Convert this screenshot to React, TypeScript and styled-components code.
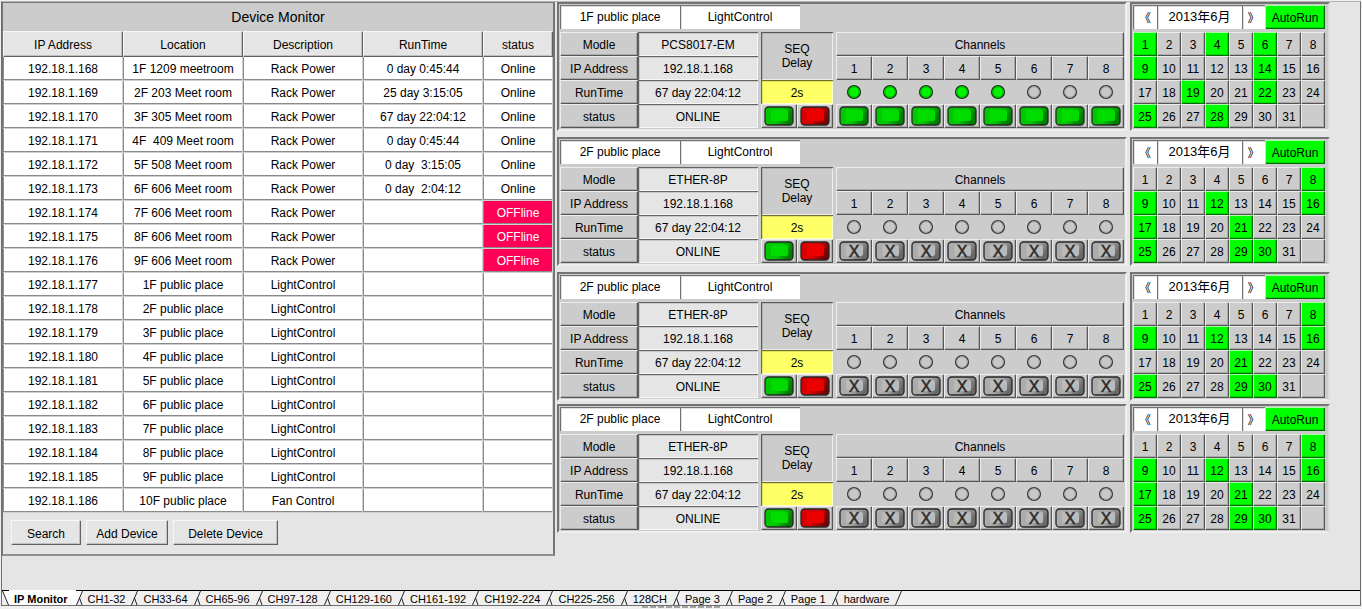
import React, { useState } from "react";
import styled, { createGlobalStyle, css } from "styled-components";

const GlobalStyle = createGlobalStyle`
  * { box-sizing: border-box; }
  body {
    margin: 0;
    background: #f0f0f0;
    color: #000;
    font-family: "Liberation Sans", Arial, "Noto Sans CJK SC", sans-serif;
    font-size: 12px;
    line-height: 14px;
  }
  button, input { font: inherit; color: inherit; margin: 0; border: 0; border-radius: 0; }
`;

const raised = css`
  box-shadow: inset 1px 1px 0 rgba(255, 255, 255, 0.65), inset -1px -1px 0 rgba(0, 0, 0, 0.5),
    inset -2px -2px 0 rgba(0, 0, 0, 0.16);
`;

const sunken = css`
  box-shadow: inset 1px 1px 0 rgba(0, 0, 0, 0.5), inset 2px 2px 0 rgba(0, 0, 0, 0.12),
    inset -1px -1px 0 rgba(255, 255, 255, 0.65);
`;

const Page = styled.div`
  min-height: 100vh;
  padding: 1px 1px 0;
  display: flex;
  flex-direction: column;
`;

const Frame = styled.div`
  flex: 1;
  display: flex;
  flex-direction: column;
  border: 1px solid #6e6e6e;
  border-top-color: #b4b8b4;
  background: #e5e5e5;
`;

const Main = styled.main`
  flex: 1;
  display: flex;
  align-items: flex-start;
  gap: 2px;
  padding-right: 30px;
`;

const DevicePanel = styled.section`
  flex: 553 553 553px;
  min-width: 0;
  border: solid #767676;
  border-width: 1px 2px 2px 1px;
  border-bottom-color: #8e8e8e;
`;

const PanelTitle = styled.h1`
  margin: 0;
  height: 28px;
  line-height: 28px;
  background: #ccc;
  font-size: 14px;
  font-weight: 400;
  text-align: center;
`;

const DeviceTable = styled.table`
  width: 100%;
  table-layout: fixed;
  border-collapse: separate;
  border-spacing: 0;
  text-align: center;
`;

const Col = styled.col<{ $w: number }>`
  width: ${(p) => p.$w}px;
`;

const DeviceHead = styled.th`
  height: 26px;
  padding: 2px 0 0;
  background: #e5e5e5;
  font-weight: 400;
  ${raised}
`;

const DeviceCell = styled.td<{ $alert?: boolean }>`
  height: 24px;
  padding: 0;
  white-space: pre;
  background: ${(p) => (p.$alert ? "#ff0055" : "#fff")};
  color: ${(p) => (p.$alert ? "#fff" : "#000")};
  box-shadow: inset -1px -1px 0 #d0d0d0, inset 1px 0 0 #8a8a8a, inset 0 -2px 0 #8a8a8a;
`;

const Toolbar = styled.div`
  display: flex;
  gap: 5px;
  padding: 7px 8px 9px;
`;

const ToolButton = styled.button<{ $w: number }>`
  width: ${(p) => p.$w}px;
  height: 25px;
  padding: 2px 0 0;
  background: #e5e5e5;
  ${raised}
`;

const Stations = styled.div`
  flex: 773 773 773px;
  min-width: 0;
`;

const StationRow = styled.div`
  display: flex;
  gap: 3px;
  margin-bottom: 6px;
  &:nth-last-child(2) { margin-bottom: 3px; }
`;

const Group = styled.section`
  min-width: 0;
  padding: 1px;
  background: #ccc;
  border: 2px solid #747474;
  border-right-color: #f0f0f0;
  border-bottom-color: #eee;
`;

const ControlGroup = styled(Group)`
  flex: 570 570 570px;
`;

const CalendarGroup = styled(Group)`
  flex: 200 200 200px;
  padding-right: 3px;
  border-right-color: #dcdcdc;
`;

const TitleRow = styled.div`
  display: flex;
  margin-bottom: 3px;
`;

const TitleInput = styled.input`
  width: 120px;
  height: 24px;
  padding: 0;
  background: #fff;
  text-align: center;
  ${sunken}
`;

const ControlBody = styled.div`
  display: grid;
  grid-template-columns: minmax(0, 198fr) minmax(0, 72fr) minmax(0, 288fr);
  column-gap: 3px;
`;

const GridTable = styled.table`
  width: 100%;
  table-layout: fixed;
  border-collapse: separate;
  border-spacing: 0;
  text-align: center;
`;

const LabelCell = styled.th`
  height: 24px;
  padding: 2px 0 0;
  font-weight: 400;
  background: #ccc;
  ${raised}
`;

const ValueCell = styled.td`
  height: 24px;
  padding: 2px 0 0;
  background: #e5e5e5;
  ${sunken}
`;

const Plain = styled.td`
  height: 24px;
  padding: 0;
`;

const Sequence = styled.div`
  display: grid;
  grid-template-columns: 1fr 1fr;
  grid-template-rows: 48px 24px 24px;
`;

const SequenceLabel = styled.label`
  grid-column: 1 / -1;
  display: flex;
  align-items: center;
  justify-content: center;
  text-align: center;
  ${sunken}
`;

const DelayInput = styled.input`
  grid-column: 1 / -1;
  width: 100%;
  height: 24px;
  padding: 2px 0 0;
  background: #ffff66;
  text-align: center;
  ${sunken}
`;

const KeyButton = styled.button`
  display: flex;
  align-items: center;
  justify-content: center;
  width: 100%;
  height: 24px;
  padding: 0;
  background: #ccc;
  ${raised}
`;

const Art = styled.svg`
  display: block;
  flex: none;
  margin: 0 auto;
`;

const CalendarHead = styled.div`
  display: grid;
  grid-template-columns: 24fr 85fr 23fr 60fr;
  margin-bottom: 3px;
`;

const StepButton = styled.button`
  height: 24px;
  padding: 3px 0 0;
  background: #fff;
  ${sunken}
`;

const MonthInput = styled.input`
  width: 100%;
  min-width: 0;
  height: 24px;
  padding: 0 0 3px;
  background: #fff;
  font-size: 13px;
  text-align: center;
  ${sunken}
`;

const AutoButton = styled.button`
  height: 24px;
  padding: 2px 0 0;
  background: #00ff00;
  ${raised}
`;

const Days = styled.div`
  display: grid;
  grid-template-columns: repeat(8, 1fr);
`;

const Day = styled.button<{ $on?: boolean }>`
  height: 24px;
  padding: 2px 0 0;
  background: ${(p) => (p.$on ? "#00ff00" : "#ccc")};
  ${raised}
`;

const TabBar = styled.nav`
  display: flex;
  height: 14px;
  background: #f0f0f0;
  box-shadow: 0 -1px 0 #000;
`;

const Tab = styled.button<{ $active?: boolean }>`
  height: 15px;
  margin-top: -1px;
  padding: ${(p) => (p.$active ? "2px 8px 0 5px" : "2px 6px 0 5px")};
  border-top: 1px solid ${(p) => (p.$active ? "#fff" : "#000")};
  background: ${(p) => (p.$active ? "#fff" : "#f0f0f0")};
  font-size: 11px;
  line-height: 12px;
  font-weight: ${(p) => (p.$active ? 700 : 400)};
`;

const Footer = styled.footer`
  height: 3px;
  display: flex;
  justify-content: center;
`;

const Gripper = styled.div`
  width: 78px;
  height: 2px;
  background: repeating-linear-gradient(90deg, #a4a4a4 0 6px, #f0f0f0 6px 8px);
`;

type Device = [string, string, string, string, string];

const devices: Device[] = [
  ["192.18.1.168", "1F 1209 meetroom", "Rack Power", "0 day 0:45:44", "Online"],
  ["192.18.1.169", "2F 203 Meet room", "Rack Power", "25 day 3:15:05", "Online"],
  ["192.18.1.170", "3F 305 Meet room", "Rack Power", "67 day 22:04:12", "Online"],
  ["192.18.1.171", "4F  409 Meet room", "Rack Power", "0 day 0:45:44", "Online"],
  ["192.18.1.172", "5F 508 Meet room", "Rack Power", "0 day  3:15:05", "Online"],
  ["192.18.1.173", "6F 606 Meet room", "Rack Power", "0 day  2:04:12", "Online"],
  ["192.18.1.174", "7F 606 Meet room", "Rack Power", "", "OFFline"],
  ["192.18.1.175", "8F 606 Meet room", "Rack Power", "", "OFFline"],
  ["192.18.1.176", "9F 606 Meet room", "Rack Power", "", "OFFline"],
  ["192.18.1.177", "1F public place", "LightControl", "", ""],
  ["192.18.1.178", "2F public place", "LightControl", "", ""],
  ["192.18.1.179", "3F public place", "LightControl", "", ""],
  ["192.18.1.180", "4F public place", "LightControl", "", ""],
  ["192.18.1.181", "5F public place", "LightControl", "", ""],
  ["192.18.1.182", "6F public place", "LightControl", "", ""],
  ["192.18.1.183", "7F public place", "LightControl", "", ""],
  ["192.18.1.184", "8F public place", "LightControl", "", ""],
  ["192.18.1.185", "9F public place", "LightControl", "", ""],
  ["192.18.1.186", "10F public place", "Fan Control", "", ""],
];

interface Station {
  place: string;
  model: string;
  lit: number;
  enabled: boolean;
  days: number[];
}

const laterDays = [8, 9, 12, 16, 17, 21, 25, 29, 30];

const stations: Station[] = [
  { place: "1F public place", model: "PCS8017-EM", lit: 5, enabled: true, days: [1, 4, 6, 9, 14, 19, 22, 25, 28] },
  { place: "2F public place", model: "ETHER-8P", lit: 0, enabled: false, days: laterDays },
  { place: "2F public place", model: "ETHER-8P", lit: 0, enabled: false, days: [8, 9, 12, 16, 21, 25, 29, 30] },
  { place: "2F public place", model: "ETHER-8P", lit: 0, enabled: false, days: laterDays },
];

const tabs = [
  "IP Monitor", "CH1-32", "CH33-64", "CH65-96", "CH97-128", "CH129-160", "CH161-192",
  "CH192-224", "CH225-256", "128CH", "Page 3", "Page 2", "Page 1", "hardware",
];

const channels = [1, 2, 3, 4, 5, 6, 7, 8];

const keyColors = {
  green: ["#00c800", "#007c00", "#00dc00"],
  red: ["#d80000", "#7c0000", "#ec0000"],
  grey: ["#acacac", "#686868", "#bababa"],
};

function KeyCap({ tone }: { tone: keyof typeof keyColors }) {
  const [base, edge, face] = keyColors[tone];
  const id = React.useId();
  return (
    <Art width="30" height="20" viewBox="0 0 30 20" aria-hidden="true">
      <defs>
        <linearGradient id={id} x1="0" y1="0" x2="1" y2="0.35">
          <stop offset="0" stopColor={base} />
          <stop offset="0.6" stopColor={base} />
          <stop offset="1" stopColor={edge} />
        </linearGradient>
      </defs>
      <rect x="1" y="1" width="28" height="18" rx="3.5" fill={`url(#${id})`} stroke="#262626" strokeWidth="1.3" />
      <rect x="7" y="4" width="17" height="11" rx="2" fill={face} />
      {tone === "grey" && (
        <text x="15" y="16" textAnchor="middle" fontSize="16" fill="#2c2c2c" stroke="#2c2c2c" strokeWidth="0.5">X</text>
      )}
    </Art>
  );
}

function Led({ on }: { on: boolean }) {
  return (
    <Art width="16" height="16" viewBox="0 0 16 16" role="img" aria-label={on ? "on" : "off"}>
      <circle cx="8" cy="8" r="6.4" fill={on ? "#00f400" : "#c8c8c8"} stroke={on ? "#1c3c1c" : "#3c3c3c"} strokeWidth="1.4" />
      <circle cx="8" cy="8" r="5.2" fill="none" stroke={on ? "#00b400" : "#a4a4a4"} strokeWidth="0.9" />
    </Art>
  );
}

type EdgeKind = "none" | "tab" | "active";

function TabEdge({ left, right }: { left: EdgeKind; right: EdgeKind }) {
  return (
    <Art width="7" height="14" viewBox="0 0 7 14" aria-hidden="true">
      {left === "active" && <path d="M0 0H6.5L0 14Z" fill="#fff" />}
      {right === "active" && <path d="M0 0H7V14H6.5Z" fill="#fff" />}
      {left !== "none" && <path d="M6.5 0L0.5 14" stroke="#222" fill="none" />}
      {right !== "none" && (
        <path d={left === "none" ? "M0.5 0L6.5 14" : "M3.5 7L6 14"} stroke="#222" fill="none" />
      )}
    </Art>
  );
}

const TabEnd = styled.span`
  flex: 1;
`;

function Calendar({ active, label }: { active: number[]; label: string }) {
  return (
    <CalendarGroup aria-label={`${label} schedule`}>
      <CalendarHead>
        <StepButton aria-label="Previous month">《</StepButton>
        <MonthInput aria-label="Month" defaultValue="2013年6月" />
        <StepButton aria-label="Next month">》</StepButton>
        <AutoButton>AutoRun</AutoButton>
      </CalendarHead>
      <Days>
        {Array.from({ length: 31 }, (_, i) => i + 1).map((d) => (
          <Day key={d} $on={active.includes(d)} aria-pressed={active.includes(d)}>{d}</Day>
        ))}
        <Day disabled aria-label="No day" />
      </Days>
    </CalendarGroup>
  );
}

function StationPanel({ station, index }: { station: Station; index: number }) {
  const delayId = `delay-${index}`;
  const info = [
    ["Modle", station.model],
    ["IP Address", "192.18.1.168"],
    ["RunTime", "67 day 22:04:12"],
    ["status", "ONLINE"],
  ];
  return (
    <StationRow>
      <ControlGroup aria-label={station.place}>
        <TitleRow>
          <TitleInput aria-label="Place" defaultValue={station.place} />
          <TitleInput aria-label="Description" defaultValue="LightControl" />
        </TitleRow>
        <ControlBody>
          <GridTable>
            <colgroup><Col $w={78} /><Col $w={120} /></colgroup>
            <tbody>
              {info.map(([name, value]) => (
                <tr key={name}>
                  <LabelCell scope="row">{name}</LabelCell>
                  <ValueCell>{value}</ValueCell>
                </tr>
              ))}
            </tbody>
          </GridTable>
          <Sequence>
            <SequenceLabel htmlFor={delayId}>SEQ<br />Delay</SequenceLabel>
            <DelayInput id={delayId} defaultValue="2s" />
            <KeyButton aria-label="Sequence on"><KeyCap tone="green" /></KeyButton>
            <KeyButton aria-label="Sequence off"><KeyCap tone="red" /></KeyButton>
          </Sequence>
          <GridTable>
            <thead>
              <tr><LabelCell colSpan={8}>Channels</LabelCell></tr>
              <tr>{channels.map((c) => <LabelCell key={c} scope="col">{c}</LabelCell>)}</tr>
            </thead>
            <tbody>
              <tr>{channels.map((c) => <Plain key={c}><Led on={c <= station.lit} /></Plain>)}</tr>
              <tr>
                {channels.map((c) => (
                  <Plain key={c}>
                    <KeyButton aria-label={`Channel ${c}`}>
                      <KeyCap tone={station.enabled ? "green" : "grey"} />
                    </KeyButton>
                  </Plain>
                ))}
              </tr>
            </tbody>
          </GridTable>
        </ControlBody>
      </ControlGroup>
      <Calendar active={station.days} label={station.place} />
    </StationRow>
  );
}

export default function App() {
  const [current, setCurrent] = useState(0);
  const kind = (i: number): EdgeKind => (i === current ? "active" : i < tabs.length ? "tab" : "none");
  return (
    <Page>
      <GlobalStyle />
      <Frame>
        <Main>
          <DevicePanel>
            <PanelTitle>Device Monitor</PanelTitle>
            <DeviceTable>
              <colgroup>
                {[120, 120, 120, 120, 70].map((w, i) => <Col key={i} $w={w} />)}
              </colgroup>
              <thead>
                <tr>
                  {["IP Address", "Location", "Description", "RunTime", "status"].map((h) => (
                    <DeviceHead key={h} scope="col">{h}</DeviceHead>
                  ))}
                </tr>
              </thead>
              <tbody>
                {devices.map((row) => (
                  <tr key={row[0]}>
                    {row.map((value, i) => (
                      <DeviceCell key={i} $alert={value === "OFFline"}>{value}</DeviceCell>
                    ))}
                  </tr>
                ))}
              </tbody>
            </DeviceTable>
            <Toolbar>
              <ToolButton $w={70}>Search</ToolButton>
              <ToolButton $w={82}>Add Device</ToolButton>
              <ToolButton $w={105}>Delete Device</ToolButton>
            </Toolbar>
          </DevicePanel>
          <Stations>
            {stations.map((s, i) => <StationPanel key={i} station={s} index={i} />)}
          </Stations>
        </Main>
        <TabBar aria-label="Pages">
          <span><TabEdge left="none" right={kind(0)} /></span>
          {tabs.map((name, i) => (
            <React.Fragment key={name}>
              <Tab $active={i === current} onClick={() => setCurrent(i)}>{name}</Tab>
              <span><TabEdge left={kind(i)} right={kind(i + 1)} /></span>
            </React.Fragment>
          ))}
          <TabEnd />
        </TabBar>
      </Frame>
      <Footer><Gripper /></Footer>
    </Page>
  );
}
